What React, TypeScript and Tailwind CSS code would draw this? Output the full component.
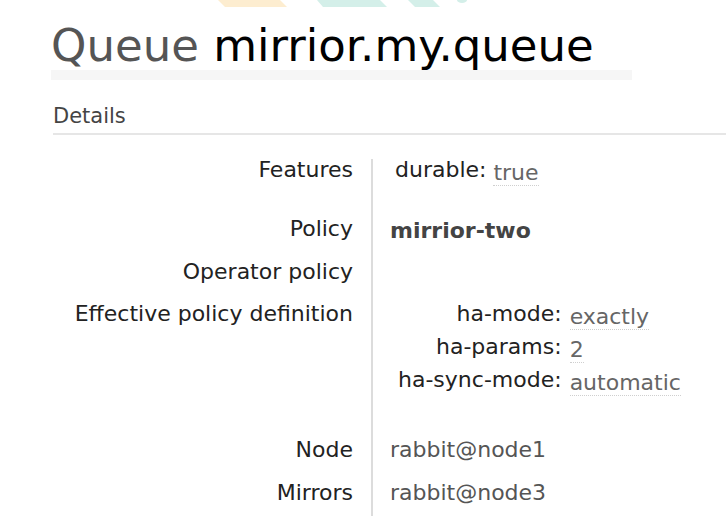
import React from 'react'

const Val: React.FC<{ children: React.ReactNode }> = ({ children }) => (
    <span className="text-[#666] border-b border-dotted border-[#cfcfcf] align-[-3px] leading-[20px]">
        {children}
    </span>
)

const policyDefinition = [
    { key: 'ha-mode:', value: 'exactly' },
    { key: 'ha-params:', value: '2' },
    { key: 'ha-sync-mode:', value: 'automatic' },
]

export default function App() {
    return (
        <div className="w-[726px] h-[516px] overflow-hidden bg-white font-['DejaVu_Sans',sans-serif] text-[#222]">
            {/* header stripes */}
            <svg width="726" height="8" viewBox="0 0 726 8" className="block">
                <polygon points="218,0 280,0 287,7 225,7" fill="#fdedd0" />
                <polygon points="317,0 380,0 387,7 323,7" fill="#d4efe9" />
                <polygon points="408,0 433,0 440,7 415,7" fill="#d4efe9" />
                <ellipse cx="462" cy="0" rx="5" ry="3" fill="#d4efe9" />
            </svg>

            {/* Title */}
            <div className="pl-[51px] pt-[15px]">
                <h1 className="text-[45px] leading-none text-[#555] whitespace-nowrap">
                    Queue <span className="text-black">mirrior.my.queue</span>
                </h1>
                <div className="mt-[2px] h-[10px] w-[581px] bg-[#f6f6f6]" />
            </div>

            {/* Details section */}
            <div className="pl-[53px] pt-[26px]">
                <h2 className="text-[21px] leading-[21px] text-[#444]">Details</h2>
                <div className="mt-[6px] h-[2px] bg-[#e6e6e6]" />
            </div>

            <div className="mt-[24px] grid grid-cols-[371px_1fr] text-[22px] leading-[22px]">
                {/* Features */}
                <div className="text-right pr-[18px]">Features</div>
                <div className="border-l-2 border-[#dcdcdc] pl-[22px]">
                    durable: <Val>true</Val>
                </div>

                {/* Policy */}
                <div className="text-right pr-[18px] pt-[35px]">Policy</div>
                <div className="border-l-2 border-[#dcdcdc] pl-[17px] pt-[37px] font-bold text-[#444]">
                    mirrior-two
                </div>

                {/* Operator policy */}
                <div className="text-right pr-[18px] pt-[19px]">Operator policy</div>
                <div className="border-l-2 border-[#dcdcdc]" />

                {/* Effective policy definition */}
                <div className="text-right pr-[18px] pt-[20px]">Effective policy definition</div>
                <div className="border-l-2 border-[#dcdcdc] pl-[25px] pt-[20px]">
                    <div className="grid grid-cols-[auto_auto] justify-start gap-x-[8px] gap-y-[9px]">
                        {policyDefinition.map((row) => (
                            <React.Fragment key={row.key}>
                                <div className="text-right">{row.key}</div>
                                <div>
                                    <Val>{row.value}</Val>
                                </div>
                            </React.Fragment>
                        ))}
                    </div>
                </div>

                {/* Node */}
                <div className="text-right pr-[18px] pt-[46px]">Node</div>
                <div className="border-l-2 border-[#dcdcdc] pl-[17px] pt-[46px] text-[#555]">
                    rabbit@node1
                </div>

                {/* Mirrors */}
                <div className="text-right pr-[18px] pt-[21px]">Mirrors</div>
                <div className="border-l-2 border-[#dcdcdc] pl-[17px] pt-[21px] pb-[40px] text-[#555]">
                    rabbit@node3
                </div>
            </div>
        </div>
    )
}
